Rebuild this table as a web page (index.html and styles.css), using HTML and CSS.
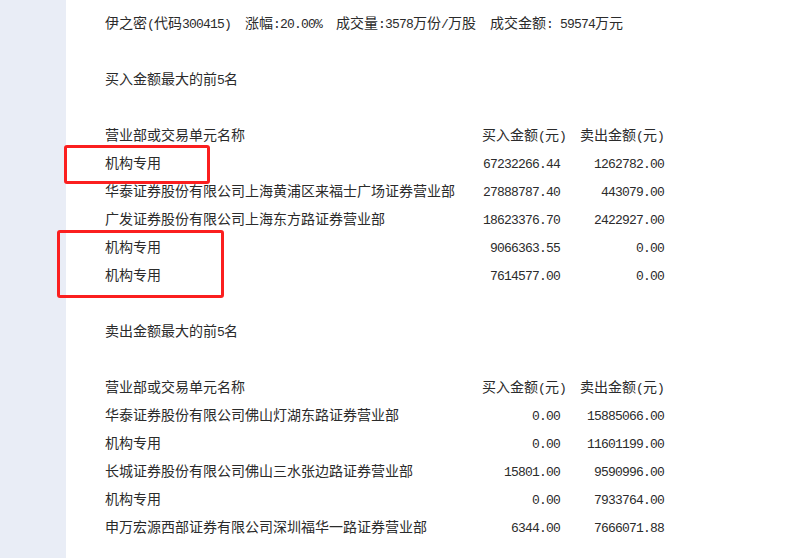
FILE: index.html
```html
<!DOCTYPE html>
<html lang="zh-CN">
<head>
  <meta charset="UTF-8" />
  <title>龙虎榜 - 伊之密</title>
  <link rel="stylesheet" href="styles.css">
</head>
<body>

<aside class="side"></aside>

<main class="page">
  <p class="line">伊之密<span class="n">(</span>代码<span class="n">300415)  </span>涨幅<span class="n">:20.00%  </span>成交量<span class="n">:3578</span>万份<span class="n">/</span>万股<span class="n">  </span>成交金额<span class="n">: 59574</span>万元</p>
  <p class="line"></p>
  <p class="line">买入金额最大的前<span class="n">5</span>名</p>
  <p class="line"></p>

  <div class="seats">
    <div class="row head">
      <span>营业部或交易单元名称</span>
      <span>买入金额<span class="n">(</span>元<span class="n">)</span></span>
      <span>卖出金额<span class="n">(</span>元<span class="n">)</span></span>
    </div>
    <div class="row"><span>机构专用</span><span class="n buy">67232266.44</span><span class="n sell">1262782.00</span></div>
    <div class="row"><span>华泰证券股份有限公司上海黄浦区来福士广场证券营业部</span><span class="n buy">27888787.40</span><span class="n sell">443079.00</span></div>
    <div class="row"><span>广发证券股份有限公司上海东方路证券营业部</span><span class="n buy">18623376.70</span><span class="n sell">2422927.00</span></div>
    <div class="row"><span>机构专用</span><span class="n buy">9066363.55</span><span class="n sell">0.00</span></div>
    <div class="row"><span>机构专用</span><span class="n buy">7614577.00</span><span class="n sell">0.00</span></div>
  </div>

  <p class="line"></p>
  <p class="line">卖出金额最大的前<span class="n">5</span>名</p>
  <p class="line"></p>

  <div class="seats">
    <div class="row head">
      <span>营业部或交易单元名称</span>
      <span>买入金额<span class="n">(</span>元<span class="n">)</span></span>
      <span>卖出金额<span class="n">(</span>元<span class="n">)</span></span>
    </div>
    <div class="row"><span>华泰证券股份有限公司佛山灯湖东路证券营业部</span><span class="n buy">0.00</span><span class="n sell">15885066.00</span></div>
    <div class="row"><span>机构专用</span><span class="n buy">0.00</span><span class="n sell">11601199.00</span></div>
    <div class="row"><span>长城证券股份有限公司佛山三水张边路证券营业部</span><span class="n buy">15801.00</span><span class="n sell">9590996.00</span></div>
    <div class="row"><span>机构专用</span><span class="n buy">0.00</span><span class="n sell">7933764.00</span></div>
    <div class="row"><span>申万宏源西部证券有限公司深圳福华一路证券营业部</span><span class="n buy">6344.00</span><span class="n sell">7666071.88</span></div>
  </div>
</main>

<!-- 标注框 -->
<div class="mark mark-1"></div>
<div class="mark mark-2"></div>

</body>
</html>
```

FILE: styles.css
```css
* {
  margin: 0; padding: 0; box-sizing: border-box;
}
body {
  background: #fff;
  color: #2b2b2b;
  font-family: "Noto Sans CJK SC", "Liberation Sans", sans-serif;
  font-size: 14px;
  line-height: 28px;
  display: flex;
  min-height: 100vh;
  overflow: hidden;
}

.side {
  width: 66px;
  flex-shrink: 0;
  background: #e9edf6;
}

.page {
  flex-grow: 1;
  padding: 8px 0 0 39px;
}

.line {
  height: 28px;
  white-space: pre;
}

/* chiffres et signes en demi-chasse */
.n {
  font-family: "Liberation Mono", monospace;
  font-size: 13px;
  letter-spacing: -0.8px;
  white-space: pre;
}

.row {
  display: grid;
  grid-template-columns: 363px 84px 84px;
  column-gap: 14px;
  align-items: baseline;
  height: 28px;
  white-space: nowrap;
}
.row .buy {
  text-align: right;
  padding-right: 6px;
}
.row .sell {
  text-align: right;
}

.mark {
  position: absolute;
  border: 3px solid #fb1f1f;
  border-radius: 3px;
}
.mark-1 {
  left: 64px;
  top: 145px;
  width: 146px;
  height: 39px;
}
.mark-2 {
  left: 57px;
  top: 230px;
  width: 167px;
  height: 68px;
}
```
